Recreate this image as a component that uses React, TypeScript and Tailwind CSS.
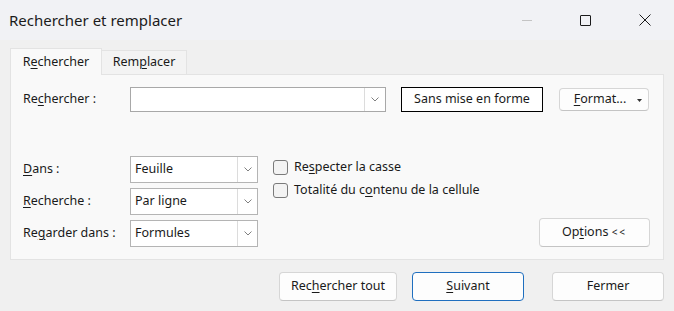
import type { ReactNode } from "react";

function U({ children }: { children: ReactNode }) {
  return <span className="underline decoration-1 underline-offset-2">{children}</span>;
}

function Chevron() {
  return (
    <svg width="8" height="5" viewBox="0 0 8 5" fill="none" aria-hidden="true">
      <path d="M0.5 0.5L4 4L7.5 0.5" stroke="#808080" strokeWidth="1" />
    </svg>
  );
}

function Select({ value }: { value: string }) {
  return (
    <div className="flex h-[27px] w-[128px] border border-[#b4b4b4] bg-white">
      <div className="flex flex-1 items-center pl-[4px]">{value}</div>
      <div className="flex w-[20px] items-center justify-center border-l border-[#dcdcdc]">
        <Chevron />
      </div>
    </div>
  );
}

function Checkbox({ children }: { children: ReactNode }) {
  return (
    <div className="flex h-[15px] items-center">
      <div className="h-[15px] w-[15px] rounded-[3px] border border-[#7a7a7a] bg-[#f3f3f3]" />
      <span className="ml-[6px]">{children}</span>
    </div>
  );
}

const btn =
  "flex items-center justify-center rounded-[4px] border border-[#d6d6d6] border-b-[#c4c4c4] bg-[#fdfdfd]";

export default function App() {
  return (
    <div
      className="flex h-[311px] w-[674px] flex-col bg-[#f0f0f0] text-[12.5px] text-[#1a1a1a]"
      style={{ fontFamily: '"Noto Sans", "Liberation Sans", sans-serif' }}
    >
      {/* title bar */}
      <div className="flex h-[40px] items-center bg-[#f1f2f5]">
        <div className="pl-[9px] text-[15px] text-[#1b1b1b]">Rechercher et remplacer</div>
        <div className="ml-auto flex h-full">
          <div className="flex w-[59px] items-center justify-center">
            <div className="h-px w-[10px] bg-[#c4c4c4]" />
          </div>
          <div className="flex w-[59px] items-center justify-center">
            <div className="h-[11px] w-[11px] rounded-[1px] border border-[#1b1b1b]" />
          </div>
          <div className="flex w-[59px] items-center justify-center">
            <svg width="12" height="12" viewBox="0 0 12 12" aria-hidden="true">
              <path d="M0.5 0.5L11.5 11.5M11.5 0.5L0.5 11.5" stroke="#1b1b1b" strokeWidth="1" />
            </svg>
          </div>
        </div>
      </div>

      <div className="px-[10px] pt-[8px]">
        {/* tabs */}
        <div className="flex h-[26px] items-end">
          <div className="relative z-10 -mb-px flex h-[27px] w-[92px] items-center justify-center border border-b-0 border-[#e3e3e3] bg-[#f9f9f9]">
            R<U>e</U>chercher
          </div>
          <div className="flex h-[24px] w-[85px] items-center justify-center border border-b-0 border-l-0 border-[#e3e3e3] bg-[#f3f3f3]">
            Rem<U>p</U>lacer
          </div>
        </div>

        {/* panel */}
        <div className="flex h-[186px] flex-col border border-[#e3e3e3] bg-[#f9f9f9] pl-[12px] pr-[13px] pt-[12px]">
          <div className="flex h-[25px] items-center">
            <div className="w-[107px]">
              Re<U>c</U>hercher :
            </div>
            <div className="flex h-[25px] w-[256px] border border-[#a8a8a8] bg-white">
              <div className="flex-1" />
              <div className="flex w-[21px] items-center justify-center border-l border-[#dcdcdc]">
                <Chevron />
              </div>
            </div>
            <div className="ml-[15px] flex h-[25px] w-[142px] items-center justify-center border border-black bg-white">
              Sans mise en forme
            </div>
            <div className={`${btn} relative ml-[16px] h-[23px] w-[90px] bg-[#fbfbfb]`}>
              <span className="pr-[8px]">
                <U>F</U>ormat...
              </span>
              <svg className="absolute right-[6px] top-[10px]" width="5" height="3" viewBox="0 0 5 3" aria-hidden="true">
                <path d="M0 0H5L2.5 3Z" fill="#333" />
              </svg>
            </div>
          </div>

          <div className="mt-[44px] flex">
            <div className="flex flex-col gap-[5px]">
              <div className="flex items-center">
                <div className="w-[107px]">
                  <U>D</U>ans :
                </div>
                <Select value="Feuille" />
              </div>
              <div className="flex items-center">
                <div className="w-[107px]">
                  <U>R</U>echerche :
                </div>
                <Select value="Par ligne" />
              </div>
              <div className="flex items-center">
                <div className="w-[107px]">
                  Re<U>g</U>arder dans :
                </div>
                <Select value="Formules" />
              </div>
            </div>

            <div className="ml-[15px] flex flex-col gap-[8px] pt-[4px]">
              <Checkbox>
                Re<U>s</U>pecter la casse
              </Checkbox>
              <Checkbox>
                Totalité du c<U>o</U>ntenu de la cellule
              </Checkbox>
            </div>

            <div className={`${btn} ml-auto h-[29px] w-[111px] self-end`}>
              <span>
                Op<U>t</U>ions <span className="text-[10px] tracking-[2px]">&lt;&lt;</span>
              </span>
            </div>
          </div>
        </div>

        {/* bottom buttons */}
        <div className="mt-[12px] flex justify-end">
          <div className={`${btn} h-[29px] w-[118px]`}>
            <span>
              Rec<U>h</U>ercher tout
            </span>
          </div>
          <div className="ml-[15px] flex h-[29px] w-[112px] items-center justify-center rounded-[4px] border border-[#1f6fbf] bg-[#fdfdfd]">
            <span>
              <U>S</U>uivant
            </span>
          </div>
          <div className={`${btn} ml-[28px] h-[29px] w-[112px]`}>Fermer</div>
        </div>
      </div>
    </div>
  );
}
